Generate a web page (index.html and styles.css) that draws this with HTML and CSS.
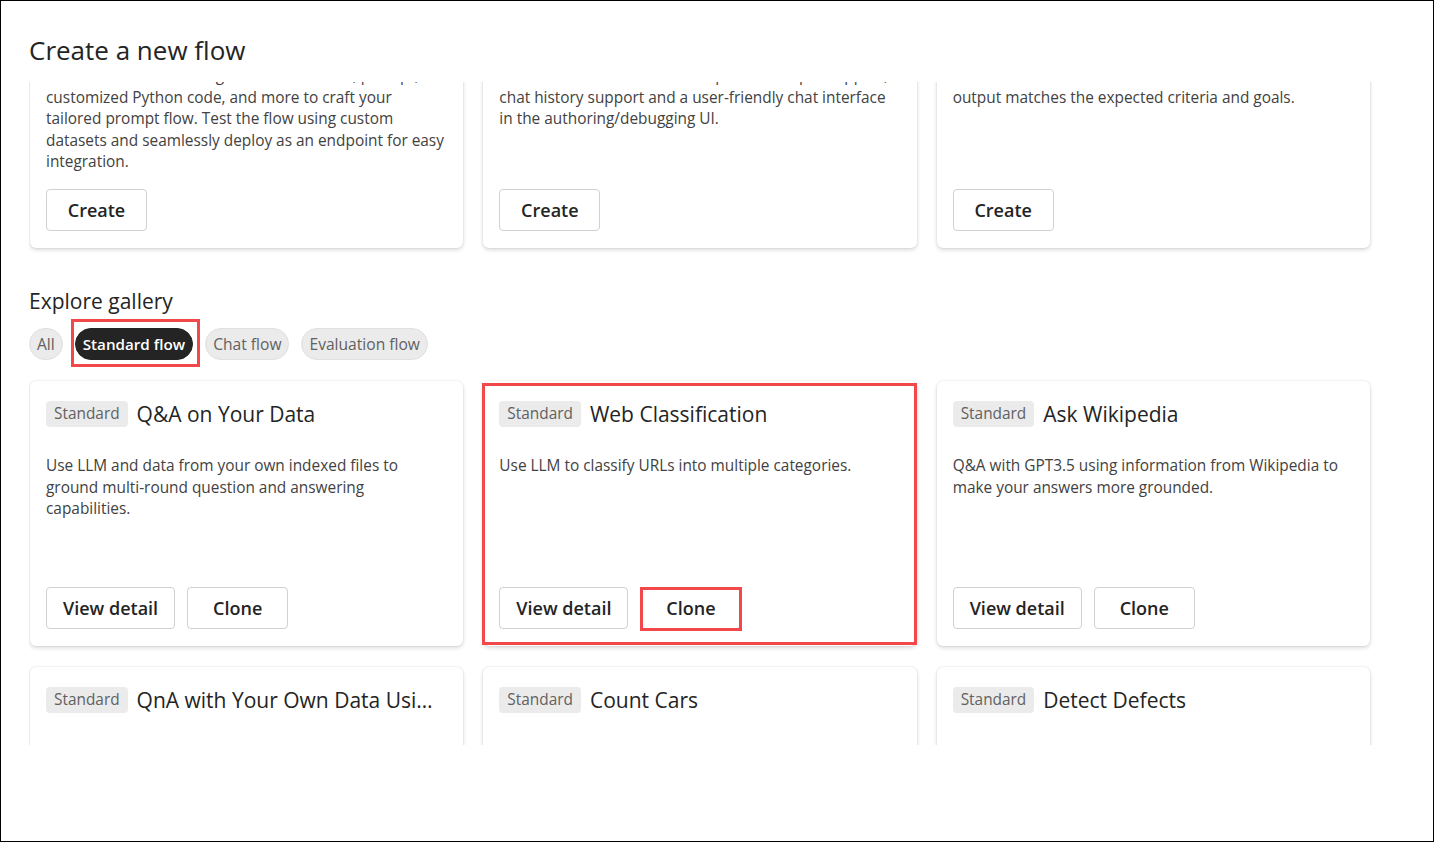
FILE: index.html
```html
<!DOCTYPE html>
<html lang="en">
<head>
<meta charset="utf-8">
<title>Create a new flow</title>
<link rel="stylesheet" href="styles.css">
</head>
<body>
<div class="frame">
  <h1 class="dialog-title">Create a new flow</h1>
  <div class="scroll">
    <div class="scroll-inner">
      <div class="grid top-grid">
        <div class="card top-card">
          <div class="card-head"><span class="card-title">Standard flow</span></div>
          <p class="card-desc">Create a flow with a range of tools like LLM, prompt, customized Python code, and more to craft your tailored prompt flow. Test the flow using custom datasets and seamlessly deploy as an endpoint for easy integration.</p>
          <div class="actions"><button class="btn">Create</button></div>
        </div>
        <div class="card top-card">
          <div class="card-head"><span class="card-title">Chat flow</span></div>
          <p class="card-desc">Create a chat flow with chat input and output support, chat history support and a user-friendly chat interface in the authoring/debugging UI.</p>
          <div class="actions"><button class="btn">Create</button></div>
        </div>
        <div class="card top-card">
          <div class="card-head"><span class="card-title">Evaluation flow</span></div>
          <p class="card-desc">Create an evaluation flow to measure how well the output matches the expected criteria and goals.</p>
          <div class="actions"><button class="btn">Create</button></div>
        </div>
      </div>

      <h2 class="section-title">Explore gallery</h2>
      <div class="pills">
        <span class="pill">All</span>
        <span class="pill pill-selected">Standard flow<span class="annot annot-pill"></span></span>
        <span class="pill">Chat flow</span>
        <span class="pill">Evaluation flow</span>
      </div>

      <div class="grid gallery-grid">
        <div class="card gallery-card">
          <div class="card-head"><span class="badge">Standard</span><span class="card-title">Q&amp;A on Your Data</span></div>
          <p class="card-desc">Use LLM and data from your own indexed files to ground multi-round question and answering capabilities.</p>
          <div class="actions"><button class="btn">View detail</button><button class="btn">Clone</button></div>
        </div>
        <div class="card gallery-card">
          <div class="card-head"><span class="badge">Standard</span><span class="card-title">Web Classification</span></div>
          <p class="card-desc">Use LLM to classify URLs into multiple categories.</p>
          <div class="actions"><button class="btn">View detail</button><button class="btn btn-marked">Clone<span class="annot annot-btn"></span></button></div>
          <span class="annot annot-card"></span>
        </div>
        <div class="card gallery-card">
          <div class="card-head"><span class="badge">Standard</span><span class="card-title">Ask Wikipedia</span></div>
          <p class="card-desc">Q&amp;A with GPT3.5 using information from Wikipedia to make your answers more grounded.</p>
          <div class="actions"><button class="btn">View detail</button><button class="btn">Clone</button></div>
        </div>
        <div class="card gallery-card">
          <div class="card-head"><span class="badge">Standard</span><span class="card-title title-clipped">QnA with Your Own Data Using Faiss Index</span></div>
          <p class="card-desc">Use LLM and a Faiss vector index built from your own data to answer questions.</p>
          <div class="actions"><button class="btn">View detail</button><button class="btn">Clone</button></div>
        </div>
        <div class="card gallery-card">
          <div class="card-head"><span class="badge">Standard</span><span class="card-title">Count Cars</span></div>
          <p class="card-desc">Use a vision model to count the cars in an image.</p>
          <div class="actions"><button class="btn">View detail</button><button class="btn">Clone</button></div>
        </div>
        <div class="card gallery-card">
          <div class="card-head"><span class="badge">Standard</span><span class="card-title">Detect Defects</span></div>
          <p class="card-desc">Use a vision model to detect defects in product images.</p>
          <div class="actions"><button class="btn">View detail</button><button class="btn">Clone</button></div>
        </div>
      </div>
    </div>
  </div>
</div>
</body>
</html>
```

FILE: styles.css
```css
* { box-sizing: border-box; }
html, body { margin: 0; padding: 0; background: #fff; }
body { font-family: "Open Sans", "Noto Sans", sans-serif; color: #242424; }

.frame {
  width: 1434px;
  height: 842px;
  border: 1px solid #000;
  background: #fff;
  padding-left: 28px;
  overflow: hidden;
}

.dialog-title {
  margin: 0;
  padding-top: 33px;
  font-size: 26px;
  line-height: 32px;
  font-weight: 400;
  color: #242424;
}

.scroll {
  margin-top: 16px;
  height: 663px;
  overflow: hidden;
}

.scroll-inner {
  margin-top: -91px;
  padding-left: 1px;
  width: 1342px;
}

.grid {
  display: grid;
  grid-template-columns: repeat(3, 1fr);
  column-gap: 20px;
  row-gap: 21px;
  width: 1340px;
}

.card {
  position: relative;
  background: #fff;
  border-radius: 6px;
  padding: 17px 16px;
  box-shadow: 0 0 2px rgba(0,0,0,0.12), 0 2px 4px rgba(0,0,0,0.14);
  display: flex;
  flex-direction: column;
  min-width: 0;
}

.gallery-card { height: 265px; }

.card-head {
  display: flex;
  align-items: center;
  height: 32px;
  min-width: 0;
}

.badge {
  flex: none;
  height: 26px;
  line-height: 26px;
  padding: 0 8px;
  border-radius: 4px;
  background: #ebebeb;
  color: #616161;
  font-size: 15.4px;
  margin-right: 9px;
}

.card-title {
  font-size: 21px;
  line-height: 28px;
  font-weight: 500;
  color: #242424;
  white-space: nowrap;
  overflow: hidden;
  text-overflow: ellipsis;
  min-width: 0;
}

.title-clipped { max-width: 300px; }

.card-desc {
  margin: 25px 0 16px;
  font-size: 15.4px;
  line-height: 21.6px;
  color: #424242;
}

.actions {
  margin-top: auto;
  display: flex;
  gap: 12px;
}

.btn {
  position: relative;
  height: 42px;
  min-width: 101px;
  padding: 0 16px;
  border: 1px solid #d1d1d1;
  border-radius: 4px;
  background: #fff;
  color: #242424;
  font-family: "Open Sans", "Noto Sans", sans-serif;
  font-size: 18px;
  font-weight: 600;
}

.section-title {
  margin: 39px 0 0 -1px;
  font-size: 21px;
  line-height: 28px;
  font-weight: 400;
  color: #242424;
}

.pills {
  margin: 13px 0 0 -1px;
  display: flex;
  gap: 12px;
}

.pill {
  position: relative;
  height: 32px;
  line-height: 30px;
  padding: 0 7px;
  border-radius: 16px;
  border: 1px solid #e0e0e0;
  background: #ebebeb;
  color: #616161;
  font-size: 15.6px;
  font-weight: 500;
}

.pill-selected {
  background: #242424;
  border-color: #242424;
  color: #fff;
  font-size: 15.2px;
  font-weight: 600;
}

.gallery-grid { margin-top: 21px; }

.annot {
  position: absolute;
  border: 3px solid #f2484b;
  pointer-events: none;
}
.annot-pill { top: -10px; left: -5px; right: -8px; bottom: -8px; }
.annot-card { top: 2px; left: -1px; right: 0; bottom: 1px; }
.annot-btn { top: -1px; left: -1px; right: -2px; bottom: -3px; }
```
